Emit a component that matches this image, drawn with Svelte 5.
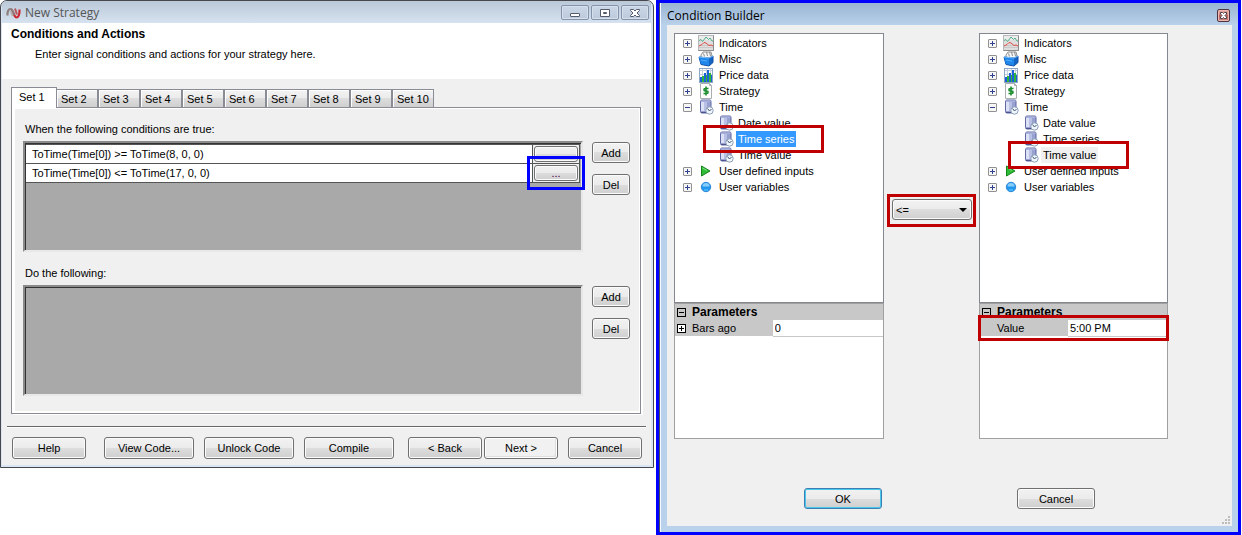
<script>
  const tabs = Array.from({ length: 10 }, (_, i) => `Set ${i + 1}`);
  let activeTab = $state(0);

  const conditions = [
    { text: 'ToTime(Time[0]) >= ToTime(8, 0, 0)', button: '', marked: false },
    { text: 'ToTime(Time[0]) <= ToTime(17, 0, 0)', button: '...', marked: true }
  ];

  const nodes = [
    { label: 'Indicators', icon: 'chart' },
    { label: 'Misc', icon: 'box' },
    { label: 'Price data', icon: 'bars' },
    { label: 'Strategy', icon: 'dollar' },
    { label: 'Time', icon: 'time', children: ['Date value', 'Time series', 'Time value'] },
    { label: 'User defined inputs', icon: 'play' },
    { label: 'User variables', icon: 'dot' }
  ];

  let operator = $state('<=');
  let barsAgo = $state('0');
  let timeValue = $state('5:00 PM');
</script>

{#snippet icon(name)}
  <svg class="icon" viewBox="0 0 16 16" aria-hidden="true">
    {#if name === 'chart'}
      <rect x="0.5" y="0.5" width="15" height="15" fill="#dedede" stroke="#b8b8b8" />
      <path d="M1 1h14v4H1z" fill="#ececec" />
      <path d="M1 10.5h14M1 12.5h14" stroke="#c9c9c9" />
      <path d="M0.5 15.5h15v-15" fill="none" stroke="#8c8c8c" />
      <path d="M1 5.500l2-1 1.500 2 2-2.500L8 2l2.500 2.500L12 3l2 3h1" fill="none" stroke="#4fae88" />
      <path d="M1 11l3-1.500 2-2 2 .5 3 2.500 2-.5 2 1" fill="none" stroke="#e04a44" />
    {:else if name === 'box'}
      <path d="M3 4l2-3h8l1 4-2 3H3z" fill="#f6f6f6" stroke="#8d8d8d" />
      <path d="M5.500 2.500l1 3M8.500 1l1 4M11.500 1l1 4" stroke="#8d8d8d" />
      <path d="M1 6l10 1 4-2v6.500l-4 3.500-8-1.500z" fill="#1464c4" stroke="#0f4fa4" stroke-linejoin="round" />
      <path d="M1 6l10 1v7.500l-8-1.500z" fill="#1f86ec" />
      <path d="M1 6l10 1 4-2" fill="none" stroke="#7cc0fb" />
      <path d="M3 9l6 1" stroke="#53aef8" />
    {:else if name === 'bars'}
      <rect x="1" y="1" width="14" height="14" fill="#fff" />
      <path d="M4.500 1v14M8.500 1v14M12.500 1v14M1 3.500h14M1 7.500h14M1 11.500h14" stroke="#c3d0e0" />
      <rect x="1.500" y="1.500" width="13" height="14" fill="none" stroke="#8fa7c6" />
      <path d="M2 10h2v5H2zM6 6h2v9H6zM9 3h2v12H9zM13 8h1v7h-1z" fill="#1c62d6" />
      <path d="M4 9h2v6H4zM8 8h1v7H8zM11 6h2v9h-2z" fill="#2fb53a" />
    {:else if name === 'dollar'}
      <path d="M2.500 0.500h9l2 2v13h-11z" fill="#fdfdfd" stroke="#a9aeb0" />
      <path d="M11.500 0.500v2h2" fill="none" stroke="#a9aeb0" />
      <path d="M10.500 5.500H7.200C5.500 5.500 5.500 8 7.200 8h1.600c1.700 0 1.700 2.500 0 2.500H5.500M8 3.500v9" fill="none" stroke="#1f8f32" stroke-width="1.600" />
    {:else if name === 'time'}
      <path d="M2.500 2.500q0-1.500 1.500-1.500h8q1 0 1 1.500V12q0 2-1.500 2H4q-1.500 0-1.500-1.500z" fill="#98a1d0" stroke="#5f68a3" />
      <path d="M3 1.500h9.500v1H3z" fill="#b9c1e6" />
      <path d="M3 3h3v9H3z" fill="#dce1f6" />
      <path d="M6 3h3v9H6z" fill="#b9c0e5" />
      <path d="M3 13.500h7" stroke="#4d558e" />
      <circle cx="11.500" cy="11.500" r="3.700" fill="#eff5fa" stroke="#8da0b8" />
      <path d="M9.500 9.500l2 2.500 2-2" fill="none" stroke="#3c5878" />
    {:else if name === 'play'}
      <path d="M3.500 3l8.500 5-8.500 5z" fill="#2fbd37" stroke="#15841f" stroke-linejoin="round" />
      <path d="M4.500 5l4.500 2.500" stroke="#82df83" />
    {:else}
      <circle cx="8" cy="8" r="4.700" fill="#2397f0" stroke="#2a86d6" />
      <path d="M4.500 7.500a3.500 3.500 0 0 1 7 0z" fill="#86cdfc" />
      <path d="M6 11h4" stroke="#5fd0ff" />
    {/if}
  </svg>
{/snippet}

{#snippet tree(name, selected, style)}
  <ul class="tree" aria-label={name}>
    {#each nodes as node}
      <li>
        <div class="node">
          <button class="expander" aria-label="Toggle {node.label}">
            <svg viewBox="0 0 9 9"><path d={node.children ? 'M2 4.5h5' : 'M2 4.5h5M4.5 2v5'} stroke="#33418c" /></svg>
          </button>
          {@render icon(node.icon)}
          <span class="label">{node.label}</span>
        </div>
        {#if node.children}
          <ul>
            {#each node.children as child}
              <li class="node child">
                {@render icon('time')}
                <span class="label {child === selected ? style : ''}">{child}</span>
                {#if child === selected}<i class="mark red around-node"></i>{/if}
              </li>
            {/each}
          </ul>
        {/if}
      </li>
    {/each}
  </ul>
{/snippet}

<main>
  <section class="window" aria-label="New Strategy">
    <header class="titlebar">
      <svg class="logo" viewBox="0 0 15 12" aria-hidden="true">
        <path d="M5 2.500c2.500 0 2.500 8 5.500 8 2 0 3.200-3 3-8" fill="none" stroke="#cb2a34" stroke-width="2.200" />
        <path d="M9 1.500l2 6" stroke="#b5575b" stroke-width="2" />
        <path d="M1.500 8.500C1.200 4.500 2.500 2 4.500 2s2.500 3 3.500 6" fill="none" stroke="#8d7f7e" stroke-width="2.200" />
        <path d="M4.500 4l2 5" stroke="#b9aeab" stroke-width="1.500" />
      </svg>
      <span class="caption">New Strategy</span>
      <button class="chrome" aria-label="Minimize"><svg viewBox="0 0 14 12"><rect x="2.500" y="6.500" width="9" height="3" rx="0.500" fill="#fff" stroke="#555b6c" /></svg></button>
      <button class="chrome" aria-label="Maximize"><svg viewBox="0 0 14 12"><path d="M2.500 2.500h9v7h-9zM5.500 5.500v1h3v-1z" fill="#fff" stroke="#555b6c" /></svg></button>
      <button class="chrome" aria-label="Close"><svg viewBox="0 0 14 12"><path d="M2.500 2.500h3L7 4l1.500-1.500h3v1L9 6l2.500 2.500v1h-3L7 8 5.500 9.500h-3v-1L5 6 2.500 3.500z" fill="#fff" stroke="#555b6c" /></svg></button>
    </header>

    <div class="client">
      <div class="intro">
        <h1>Conditions and Actions</h1>
        <p>Enter signal conditions and actions for your strategy here.</p>
      </div>

      <div class="workspace">
        <div class="tabs" role="tablist">
          {#each tabs as tab, i}
            <button role="tab" class:active={i === activeTab} aria-selected={i === activeTab} onclick={() => (activeTab = i)}>{tab}</button>
          {/each}
        </div>
        <div class="panel" role="tabpanel">
          <h2>When the following conditions are true:</h2>
          <div class="listrow">
            <div class="list">
              <table aria-label="Conditions">
                <tbody>
                  {#each conditions as c}
                    <tr>
                      <td>{c.text}</td>
                      <td class="edit">
                        <button class="btn small" aria-label="Edit condition">{c.button}</button>
                        {#if c.marked}<i class="mark blue around-edit"></i>{/if}
                      </td>
                    </tr>
                  {/each}
                </tbody>
              </table>
            </div>
            <div class="side"><button class="btn">Add</button><button class="btn">Del</button></div>
          </div>
          <h2>Do the following:</h2>
          <div class="listrow">
            <div class="list"></div>
            <div class="side"><button class="btn">Add</button><button class="btn">Del</button></div>
          </div>
        </div>
      </div>

      <footer>
        <button class="btn help">Help</button>
        <div class="group wide">
          <button class="btn">View Code...</button>
          <button class="btn">Unlock Code</button>
          <button class="btn">Compile</button>
        </div>
        <div class="group nav">
          <button class="btn">&lt; Back</button>
          <button class="btn light">Next &gt;</button>
        </div>
        <button class="btn">Cancel</button>
      </footer>
    </div>
  </section>

  <section class="dialog" aria-label="Condition Builder">
    <div class="glass">
      <header class="dialogbar">
        <span class="caption">Condition Builder</span>
        <button class="close" aria-label="Close">
          <svg viewBox="0 0 13 13"><path d="M3.500 3.500h2l1 1 1-1h2v1.500L8 6.500 9.500 8v1.500h-2l-1-1-1 1h-2V8L5 6.500 3.500 5z" fill="#fff" stroke="#4a3f4c" /></svg>
        </button>
      </header>
      <div class="builder">
        <div class="column">
          {@render tree('Left value', 'Time series', 'selected')}
          <div class="props">
            <table aria-label="Left parameters">
              <colgroup><col class="c-gutter" /><col /><col class="c-value" /></colgroup>
              <tbody>
                <tr><th class="gutter"><span class="sq"><svg viewBox="0 0 9 9"><path d="M2 4.500h5" stroke="#000" /></svg></span></th><th colspan="2" class="title">Parameters</th></tr>
                <tr>
                  <td class="gutter"><span class="sq white"><svg viewBox="0 0 9 9"><path d="M2 4.500h5M4.500 2v5" stroke="#000" /></svg></span></td>
                  <td class="name"><label for="bars-ago">Bars ago</label></td>
                  <td class="value"><input id="bars-ago" bind:value={barsAgo} /></td>
                </tr>
              </tbody>
            </table>
          </div>
        </div>
        <div class="operator">
          <div class="combo">
            <select aria-label="Operator" bind:value={operator}>
              {#each ['<=', '<', '==', '>', '>='] as op}<option value={op}>{op}</option>{/each}
            </select>
            <i class="mark red around-combo"></i>
          </div>
        </div>
        <div class="column">
          {@render tree('Right value', 'Time value', 'inactive')}
          <div class="props">
            <table aria-label="Right parameters">
              <colgroup><col class="c-gutter" /><col /><col class="c-value" /></colgroup>
              <tbody>
                <tr><th class="gutter"><span class="sq"><svg viewBox="0 0 9 9"><path d="M2 4.500h5" stroke="#000" /></svg></span></th><th colspan="2" class="title">Parameters</th></tr>
                <tr>
                  <td class="gutter"></td>
                  <td class="name"><label for="time-value">Value</label></td>
                  <td class="value"><input id="time-value" bind:value={timeValue} /></td>
                </tr>
              </tbody>
            </table>
            <i class="mark red around-value"></i>
          </div>
        </div>
        <button class="btn ok">OK</button>
        <button class="btn dismiss">Cancel</button>
        <svg class="grip" viewBox="0 0 9 9" aria-hidden="true">
          <path d="M6 0h2v2H6zM3 3h2v2H3zM6 3h2v2H6zM0 6h2v2H0zM3 6h2v2H3zM6 6h2v2H6z" fill="#bdbdbd" />
        </svg>
      </div>
    </div>
  </section>
</main>

<style>
  :global(body) { margin: 0; background: #fff; }
  main, main :global(*) { box-sizing: border-box; }
  main {
    display: grid;
    grid-template-columns: 654fr 585fr;
    column-gap: 2px;
    align-items: start;
    padding-right: 1px;
    font: 11px/16px "Liberation Sans", Arial, sans-serif;
    color: #000;
  }
  button, input, select { font: inherit; color: inherit; margin: 0; padding: 0; }
  h1, h2, p, ul { margin: 0; padding: 0; }
  ul { list-style: none; }
  svg { display: block; }
  table { border-collapse: collapse; border-spacing: 0; width: 100%; }

  .caption { flex: 1; font: 12px/16px "Open Sans", "Noto Sans", sans-serif; padding-top: 1px; }

  .window {
    border: 1px solid #46484d;
    border-radius: 7px 7px 0 0;
    background: #d9e5f2;
    padding: 0 2px 2px 1px;
    overflow: hidden;
  }
  .titlebar {
    display: flex;
    align-items: center;
    gap: 2px;
    height: 22px;
    padding: 1px 2px 0 4px;
    background: linear-gradient(#bac8d8, #d6e2ef);
    color: #555;
  }
  .logo { width: 15px; height: 12px; }
  .logo + .caption { padding-left: 2px; }
  .chrome {
    width: 28px;
    height: 15px;
    border: 1px solid #8493a9;
    border-radius: 2px;
    background: linear-gradient(#cbd7e6, #bccadc);
    box-shadow: inset 0 0 0 1px #d6e0ec;
  }
  .chrome svg { width: 14px; height: 12px; margin: 0 auto; }

  .client { background: #f0f0f0; }
  .intro { background: #fff; height: 56px; padding: 3px 9px; }
  .intro h1 { font-size: 12px; line-height: 16px; }
  .intro p { padding: 4px 24px; }

  .workspace { padding: 8px 9px 0; }
  .tabs { display: flex; align-items: flex-end; }
  .tabs button {
    width: 42px;
    height: 18px;
    border: 1px solid #898c95;
    border-bottom: 0;
    background: linear-gradient(#f3f3f3, #ebebeb 50%, #dddddd 50%, #cfcfcf);
    box-shadow: inset 1px 1px 0 #fff;
    text-align: left;
    line-height: 16px;
    padding: 0 0 0 4px;
    white-space: nowrap;
  }
  .tabs button.active {
    width: 46px;
    height: 21px;
    background: #fff;
    padding: 0 0 2px 7px;
    margin: 0 -1px -1px 0;
    position: relative;
    z-index: 1;
  }
  .panel {
    border: 1px solid #898c95;
    box-shadow: inset 3px 1px 0 #fff, inset -1px -2px 0 #fff, 2px 1px 0 #fff;
    padding: 13px 10px 17px 11px;
    margin-right: 1px;
  }
  h2 { font-size: 11px; font-weight: normal; padding: 0 2px; line-height: 16px; }
  .listrow { display: flex; gap: 9px; margin-top: 4px; }
  .listrow + h2 { margin-top: 13px; }
  .list {
    flex: 1;
    height: 111px;
    background: #a9a9a9;
    border: 2px solid;
    border-color: #8a8a8a #e8e8e8 #e8e8e8 #8a8a8a;
    box-shadow: inset 1px 1px 0 #333;
    padding: 1px 1px 0;
  }
  .list table { background: #fff; border: 1px solid #555; border-width: 0 1px 0 0; }
  .list td { height: 19px; padding: 0 6px; border-bottom: 1px solid #555; line-height: 18px; }
  .list tr:first-child td { border-top: 1px solid #555; }
  .list td.edit { width: 47px; border-left: 1px solid #555; padding: 1px; position: relative; background: #f0f0f0; }
  .side { display: flex; flex-direction: column; gap: 11px; padding-top: 1px; }
  .side .btn { width: 38px; height: 21px; }

  .btn {
    height: 22px;
    border: 1px solid #707070;
    border-radius: 3px;
    background: linear-gradient(#f2f2f2, #ebebeb 50%, #dddddd 50%, #cfcfcf);
    box-shadow: inset 0 0 0 1px #fbfbfb;
    text-align: center;
    line-height: 18px;
    white-space: nowrap;
  }
  .btn.small { display: block; width: 100%; height: 16px; line-height: 14px; color: #40003c; }
  .btn.light { background: #f1f1f1; box-shadow: inset 0 0 0 1px #fff, inset -2px -2px 0 #ddd; }

  footer {
    display: flex;
    align-items: center;
    margin: 12px 5px 0;
    padding: 10px 4px 6px 5px;
    border-top: 1px solid #696969;
    box-shadow: inset 0 1px 0 #fff;
  }
  footer .btn { width: 74px; }
  .group { display: flex; }
  .wide { gap: 10px; margin: 0 14px 0 18px; }
  .wide .btn { width: 90px; }
  .nav { gap: 2px; margin: 0 10px 0 auto; }

  .dialog { border: 3px solid #00f; }
  .glass {
    border-left: 1px solid #45505c;
    box-shadow: inset 1px 0 0 #f5f9fd;
    background: linear-gradient(#98b4d3, #b9d1ea 22px);
    padding: 0 6px 6px 7px;
  }
  .dialogbar { display: flex; align-items: center; height: 22px; padding: 3px 2px 0 0; }
  .close {
    width: 13px;
    height: 13px;
    border: 1px solid #50333c;
    border-radius: 2px;
    background: linear-gradient(#e9b0a8, #cf7a72 50%, #b95e5a 50%, #cf8a84);
    box-shadow: inset 0 0 0 1px #eab9b4;
  }
  .close svg { width: 13px; height: 13px; margin: -1px; }
  .builder {
    display: grid;
    grid-template-columns: 210fr 95fr 189fr 57fr;
    grid-template-rows: auto 1fr;
    background: #f0f0f0;
    padding: 8px 7px 0;
    position: relative;
    min-height: 501px;
  }
  .column { min-width: 0; }
  .tree { height: 270px; background: #fff; border: 1px solid #828790; padding-top: 1px; }
  .node { display: flex; align-items: center; height: 16px; padding-left: 8px; position: relative; }
  .node.child { padding-left: 43px; }
  .icon { width: 16px; height: 16px; margin-left: 6px; flex: none; }
  .child .icon { margin-left: 0; }
  .label { padding: 0 2px; margin-left: 3px; white-space: nowrap; }
  .child .label { margin-left: 2px; }
  .selected { background: #3399ff; color: #fff; }
  .inactive { background: #f0f0f0; }
  .expander { width: 9px; height: 9px; border: 1px solid #919191; background: #f6f6f6; border-radius: 1px; }
  .expander svg { width: 9px; height: 9px; margin: -1px; }

  .props { height: 136px; background: #fff; border: 1px solid #a0a0a0; position: relative; }
  .props table { table-layout: fixed; }
  .c-gutter { width: 15px; }
  .c-value { width: 53%; }
  .props th, .props td { height: 16px; padding: 0; line-height: 16px; background: #c8c8c8; text-align: left; }
  .props .gutter { padding-left: 2px; }
  .props .title { font-size: 12px; padding-left: 2px; }
  .props .name { padding-left: 2px; }
  .props .value { background: #fff; border-bottom: 1px solid #c8c8c8; }
  .props input { display: block; width: 100%; height: 15px; border: 0; padding: 0 2px; background: none; outline: 0; }
  .sq { display: block; width: 9px; height: 9px; border: 1px solid #000; }
  .sq.white { background: #fff; }
  .sq svg { width: 9px; height: 9px; margin: -1px; }

  .operator { padding: 166px 7px 0 8px; }
  .combo { position: relative; }
  .combo select {
    display: block;
    appearance: none;
    width: 100%;
    height: 21px;
    padding: 0 3px;
    border: 1px solid #707070;
    border-radius: 3px;
    background: linear-gradient(#f2f2f2, #ebebeb 50%, #dddddd 50%, #cfcfcf);
    box-shadow: inset 0 0 0 1px #fbfbfb;
  }
  .combo::after {
    content: "";
    position: absolute;
    right: 5px;
    top: 9px;
    border: 4px solid transparent;
    border-top-color: #000;
    border-bottom: 0;
  }
  .ok, .dismiss { grid-row: 2; width: 78px; height: 21px; margin-top: 49px; }
  .ok { grid-column: 1; justify-self: end; margin-right: 2px; border-color: #3c7fb1; box-shadow: inset 0 0 0 1px #48c8ee; }
  .dismiss { grid-column: 3; margin-left: 38px; }
  .grip { position: absolute; right: 1px; bottom: 1px; width: 9px; height: 9px; }

  .mark { position: absolute; z-index: 2; pointer-events: none; border: 3px solid; }
  .red { border-color: #c00000; }
  .blue { border-color: #0000ff; }
  .around-edit { inset: -8px -6px -8px -6px; }
  .around-node { left: 28px; top: -6px; width: 121px; height: 28px; }
  .around-combo { inset: -5px -4px -7px -5px; }
  .around-value { left: -2px; right: -2px; top: 11px; height: 26px; }
</style>
